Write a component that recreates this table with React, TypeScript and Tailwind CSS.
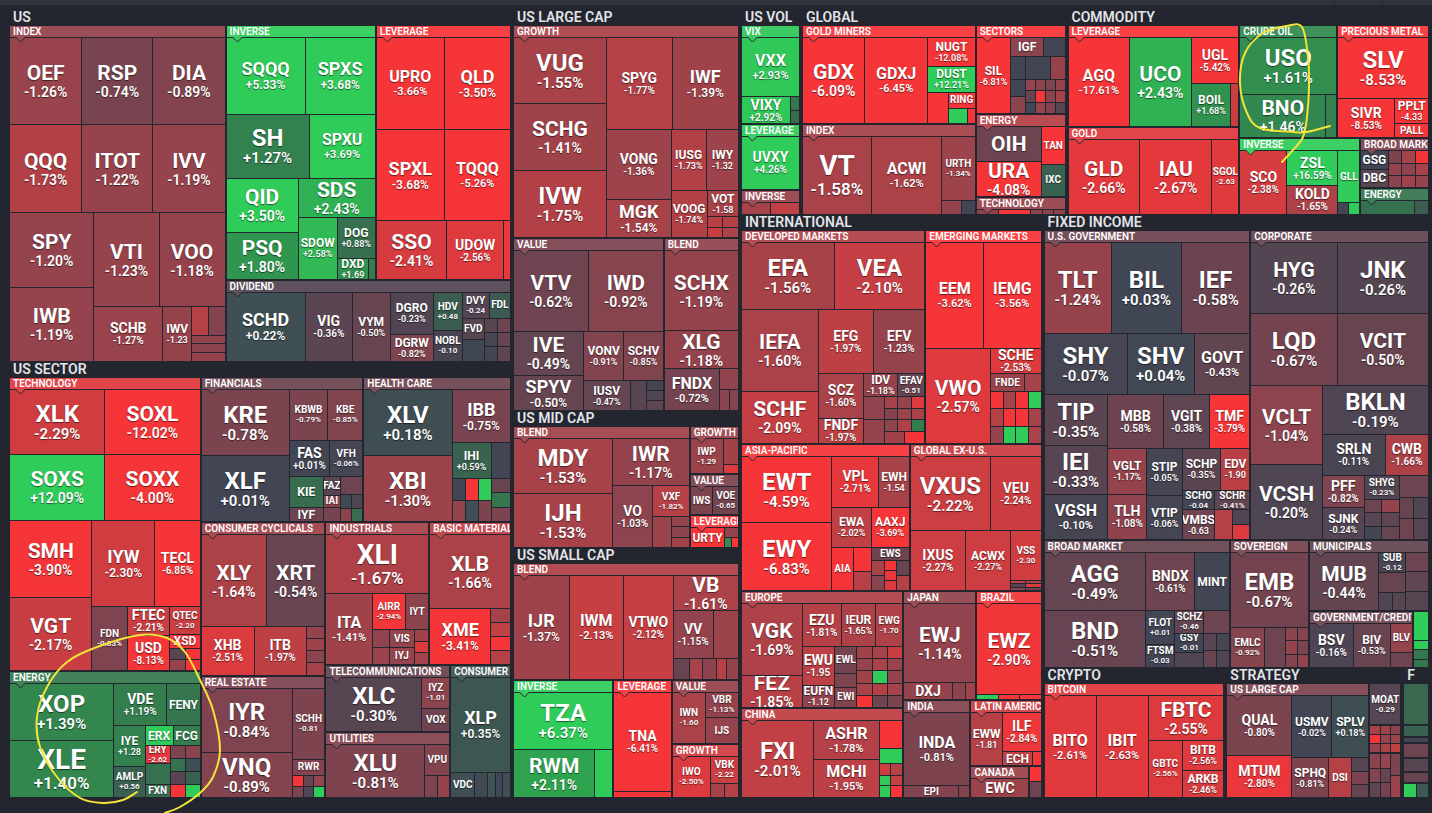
import React from "react";

const SIZE = {
  a: ["text-[28px]", "text-[17px]"],
  b: ["text-[24px]", "text-[15px]"],
  c: ["text-[21px]", "text-[14px]"],
  d: ["text-[18px]", "text-[12px]"],
  e: ["text-[16px]", "text-[11px]"],
  f: ["text-[14px]", "text-[10px]"],
  g: ["text-[12px]", "text-[9px]"],
  h: ["text-[10px]", "text-[8px]"],
} as const;
type Z = keyof typeof SIZE;

type Tile = { k: "x"; s: number; n: string; p: string; z: Z; v: number };
type Box = { k: "r" | "c"; s: number; g: number; c: Node[] };
type Grp = { k: "g"; s: number; l: string; h: number; d: "r" | "c"; c: Node[] };
type Sec = { k: "s"; s: number; l: string; d: "r" | "c"; c: Node[] };
type Node = Tile | Box | Grp | Sec;

// finviz-like colour scale
const STOPS = [
  [-3, 246, 53, 56],
  [-2, 191, 64, 69],
  [-1, 139, 68, 78],
  [0, 65, 69, 84],
  [1, 53, 118, 78],
  [2, 47, 158, 79],
  [3, 48, 204, 90],
];
function tone(v: number, lift = 0) {
  const x = Math.max(-3, Math.min(3, v));
  let i = 0;
  while (i < STOPS.length - 2 && x > STOPS[i + 1][0]) i++;
  const a = STOPS[i];
  const b = STOPS[i + 1];
  const f = (x - a[0]) / (b[0] - a[0]);
  const ch = [1, 2, 3].map((j) => {
    const c = a[j] + (b[j] - a[j]) * f;
    return Math.round(c + (255 - c) * lift);
  });
  return `rgb(${ch.join(",")})`;
}

const t = (s: number, n: string, p: string, z: Z = "f", v?: number): Tile => ({
  k: "x",
  s,
  n,
  p,
  z,
  v: v ?? parseFloat(p),
});
const b = (s: number, v: number): Tile => ({ k: "x", s, n: "", p: "", z: "h", v });
const box =
  (k: "r" | "c", g: number) =>
  (s: number, ...c: Node[]): Box => ({ k, s, g, c });
const row = box("r", 1);
const col = box("c", 1);
const ROW = box("r", 2);
const COL = box("c", 2);
const R4 = box("r", 4);
const C0 = box("c", 0);
const br = (s: number, ...v: number[]) => row(s, ...v.map((x) => b(1, x)));
const bc = (s: number, ...v: number[]) => col(s, ...v.map((x) => b(1, x)));
const grp = (s: number, l: string, h: number, d: "r" | "c", ...c: Node[]): Grp => ({ k: "g", s, l, h, d, c });
const sec = (s: number, l: string, d: "r" | "c", ...c: Node[]): Sec => ({ k: "s", s, l, d, c });

const US = sec(352, "US", "r",
  grp(215, "INDEX", -1.2, "c",
    row(87, t(72, "OEF", "-1.26%", "c"), t(71, "RSP", "-0.74%", "c"), t(72, "DIA", "-0.89%", "c")),
    row(87, t(72, "QQQ", "-1.73%", "c"), t(71, "ITOT", "-1.22%", "c"), t(72, "IVV", "-1.19%", "c")),
    row(149,
      col(84, t(75, "SPY", "-1.20%", "c"), t(74, "IWB", "-1.19%", "c")),
      col(131,
        row(95, t(65, "VTI", "-1.23%", "c"), t(66, "VOO", "-1.18%", "c")),
        row(54, t(69, "SCHB", "-1.27%", "f"), t(29, "IWV", "-1.23", "g"),
          col(33, br(29, -1.8, -0.9), br(8, -1.1), br(8, -1.0), br(8, -1.2)))))),
  COL(284,
    ROW(253,
      grp(149, "INVERSE", 3.2, "c",
        row(77, t(79, "SQQQ", "+5.33%", "d"), t(70, "SPXS", "+3.68%", "d")),
        row(64, t(83, "SH", "+1.27%", "b"), t(66, "SPXU", "+3.69%", "e")),
        row(101,
          col(72, t(54, "QID", "+3.50%", "c"), t(47, "PSQ", "+1.80%", "c")),
          col(77, t(39, "SDS", "+2.43%", "c"),
            row(62, t(39, "SDOW", "+2.58%", "g"),
              col(38, t(42, "DOG", "+0.88%", "g"), row(20, t(32, "DXD", "+1.69", "g"), b(6, 1.2))))))),
      grp(134, "LEVERAGE", -3.6, "c",
        row(92, t(68, "UPRO", "-3.66%", "e"), t(66, "QLD", "-3.50%", "d")),
        row(92, t(68, "SPXL", "-3.68%", "d"), t(66, "TQQQ", "-5.26%", "e")),
        row(58, t(71, "SSO", "-2.41%", "c"), t(57, "UDOW", "-2.56%", "f"), b(6, -2.8)))),
    grp(80, "DIVIDEND", -0.25, "r",
      t(79, "SCHD", "+0.22%", "d"), t(47, "VIG", "-0.36%", "f"), t(37, "VYM", "-0.50%", "g"),
      col(43, t(42, "DGRO", "-0.23%", "g"), t(26, "DGRW", "-0.82%", "g")),
      col(28, t(38, "HDV", "+0.48", "h"), t(30, "NOBL", "-0.10", "h")),
      col(48,
        row(26, t(27, "DVY", "-0.24", "h"), t(21, "FDL", "", "h", 0.4)),
        row(42, col(22, t(20, "FVD", "", "h", -0.3), b(21, 0.05)), col(26, br(1, -0.3, -0.6), br(1, -0.1, -0.5), br(1, 0, -0.4)))))));

const SECTOR = sec(437, "US SECTOR", "r",
  COL(190,
    grp(294, "TECHNOLOGY", -2.6, "c",
      row(65, t(95, "XLK", "-2.29%", "b"), t(95, "SOXL", "-12.02%", "c")),
      row(65, t(95, "SOXS", "+12.09%", "c"), t(95, "SOXX", "-4.00%", "c")),
      row(151,
        col(82, t(77, "SMH", "-3.90%", "c"), t(74, "VGT", "-2.17%", "c")),
        col(108,
          row(87, t(63, "IYW", "-2.30%", "d"), t(45, "TECL", "-6.85%", "f")),
          row(64, t(35, "FDN", "-0.83%", "h"),
            col(43, t(28, "FTEC", "-2.21%", "f"), t(36, "USD", "-8.13%", "f")),
            col(30, t(28, "QTEC", "-2.20", "h"), t(13, "XSD", "", "g", -3.2), row(23, bc(1, -0.3, -1.2), bc(1, -3, -3))))))),
    grp(125, "ENERGY", 1.1, "r",
      col(104, t(56, "XOP", "+1.39%", "b"), t(56, "XLE", "+1.40%", "a")),
      col(86,
        row(41, t(53, "VDE", "+1.19%", "f"), t(33, "FENY", "", "g", 1.0)),
        row(71,
          col(31, t(40, "IYE", "+1.28", "g"), t(31, "AMLP", "+0.56", "h")),
          col(55,
            row(19, t(28, "ERX", "", "g", 3.0), t(27, "FCG", "", "g", 1.2)),
            row(52,
              col(25, t(18, "ERY", "-2.62", "h"), b(21, 0.9), t(13, "FXN", "", "h", 0.8)),
              col(30, br(1, -0.8, -1.0), br(1, 0.9, 0.2), br(1, -0.3, 0.6), br(1, -3, 3)))))))),
  COL(309,
    ROW(144,
      grp(161, "FINANCIALS", -0.6, "r",
        col(88, t(66, "KRE", "-0.78%", "b"), t(65, "XLF", "+0.01%", "b")),
        col(73,
          row(51, t(38, "KBWB", "-0.79%", "h"), t(35, "KBE", "-0.85%", "h")),
          row(35, t(40, "FAS", "+0.01%", "f"), t(33, "VFH", "-0.06%", "h")),
          row(45,
            col(34, t(31, "KIE", "", "g", 0.8), t(14, "IYF", "", "g", -0.6)),
            col(17, t(19, "FAZ", "", "h", -0.3), t(12, "IAI", "", "h", -1.0), b(14, -0.7)),
            col(22, b(18, -0.6), br(14, 0.1, -0.2), br(13, -1, 0.8))))),
      grp(146, "HEALTH CARE", -0.6, "r",
        col(88, t(66, "XLV", "+0.18%", "b"), t(65, "XBI", "-1.30%", "b")),
        col(58, t(53, "IBB", "-0.75%", "d"),
          row(78,
            col(39, t(35, "IHI", "+0.59%", "g"), row(43, bc(1, 0, -1.2), bc(1, -3, 0.2), bc(1, 3, -0.8))),
            col(19, b(35, 0), b(14, -0.5), b(14, 1), b(14, -0.8)))))),
    ROW(274,
      COL(123,
        grp(152, "CONSUMER CYCLICALS", -1.4, "c",
          row(91, t(65, "XLY", "-1.64%", "c"), t(58, "XRT", "-0.54%", "c")),
          row(48, t(53, "XHB", "-2.51%", "f"), t(52, "ITB", "-1.97%", "f"), bc(18, -1.2, -1.4, -1.0, -1.5))),
        grp(121, "REAL ESTATE", -0.8, "r",
          col(91, t(64, "IYR", "-0.84%", "b"), t(45, "VNQ", "-0.89%", "b")),
          col(32, t(72, "SCHH", "-0.81", "h"), t(15, "RWR", "", "h", -0.9), row(22, bc(1, -3, -0.8), bc(1, -0.5, -0.2), bc(1, -1.2, 3))))),
      COL(184,
        ROW(141,
          grp(102, "INDUSTRIALS", -1.5, "c",
            t(58, "XLI", "-1.67%", "a"),
            row(70, t(46, "ITA", "-1.41%", "e"),
              col(56,
                row(36, t(33, "AIRR", "-2.94%", "h"), t(23, "IYT", "", "h", -1.0)),
                row(34, bc(17, -1.1, -1.3), col(25, t(18, "VIS", "", "h", -1.2), t(16, "IYJ", "", "h", -1.2)), bc(14, -1.4, -2.5, -1.5))))),
          grp(80, "BASIC MATERIALS", -2.0, "c",
            t(73, "XLB", "-1.66%", "c"),
            row(55, t(61, "XME", "-3.41%", "d"), bc(19, -1.5, -2.0, -3, -1.8)))),
        ROW(132,
          COL(123,
            grp(66, "TELECOMMUNICATIONS", -0.5, "r", t(96, "XLC", "-0.30%", "b"), col(27, t(31, "IYZ", "-1.01", "h"), t(23, "VOX", "", "h", -0.6))),
            grp(64, "UTILITIES", -0.9, "r", t(99, "XLU", "-0.81%", "b"), col(24, t(30, "VPU", "", "h", -0.9), br(22, -0.8, -1.2)))),
          grp(59, "CONSUMER DEFENSIVE", 0.3, "c",
            t(96, "XLP", "+0.35%", "d"),
            row(24, t(24, "VDC", "", "h", 0.2), b(12, 0.1), b(7, 0.3), b(7, 0.0), b(7, 0.2))))))));

const LARGE = sec(402, "US LARGE CAP", "c",
  grp(211, "GROWTH", -1.6, "r",
    col(92, t(66, "VUG", "-1.55%", "b"), t(67, "SCHG", "-1.41%", "c"), t(67, "IVW", "-1.75%", "b")),
    col(131,
      row(92, t(65, "SPYG", "-1.77%", "f"), t(66, "IWF", "-1.39%", "d")),
      row(108,
        col(64, t(70, "VONG", "-1.36%", "f"), t(38, "MGK", "-1.54%", "d")),
        col(67,
          row(61, t(35, "IUSG", "-1.73%", "g"), t(32, "IWY", "-1.32", "g")),
          row(47, t(36, "VOOG", "-1.74%", "g"), col(31, t(26, "VOT", "-1.58", "g"), row(21, bc(1, -1.9, -2.2), bc(1, -1.8, -1.6)))))))),
  ROW(171,
    grp(148, "VALUE", -0.8, "c",
      row(80, t(74, "VTV", "-0.62%", "c"), t(74, "IWD", "-0.92%", "c")),
      row(79,
        col(69, t(44, "IVE", "-0.49%", "c"), t(35, "SPYV", "-0.50%", "d")),
        col(79,
          row(49, t(40, "VONV", "-0.91%", "g"), t(39, "SCHV", "-0.85%", "g")),
          row(30, t(47, "IUSV", "-0.47%", "g"), bc(16, -0.3), bc(16, -0.1, -0.2, -0.4))))),
    grp(73, "BLEND", -1.1, "c",
      t(80, "SCHX", "-1.19%", "c"), t(37, "XLG", "-1.18%", "c"),
      row(42, t(55, "FNDX", "-0.72%", "e"), col(18, b(1, -1.1), br(1, -1.0, -0.9))))));

const MID = sec(137, "US MID CAP", "r",
  grp(174, "BLEND", -1.4, "r",
    col(98, t(54, "MDY", "-1.53%", "b"), t(53, "IJH", "-1.53%", "b")),
    col(76, t(46, "IWR", "-1.17%", "c"),
      row(61, t(40, "VO", "-1.03%", "f"), col(36, t(30, "VXF", "-1.82%", "h"), row(31, bc(1, -1.3), bc(1, -1.2, -1.0, -1.4)))))),
  COL(47,
    grp(46, "GROWTH", -1.3, "r", t(33, "IWP", "-1.29", "h"), col(15, b(3, -1.4), b(1, -2.5))),
    grp(39, "VALUE", -0.8, "r", t(22, "IWS", "", "h", -0.8), t(25, "VOE", "-0.65", "h")),
    grp(31, "LEVERAGE", -3.5, "r", t(34, "URTY", "", "g", -3.6), col(13, b(1, -1.2), br(1, 1.5, -3)))));

const SMALL = sec(250, "US SMALL CAP", "c",
  grp(114, "BLEND", -1.7, "r",
    t(55, "IJR", "-1.37%", "d"), t(54, "IWM", "-2.13%", "e"), t(49, "VTWO", "-2.12%", "f"),
    col(65,
      t(34, "VB", "-1.61%", "c"),
      row(47, t(40, "VV", "-1.15%", "f"), b(25, -1.3)),
      row(20, b(17, -0.5), b(13, -1.5), b(13, -1), b(10, -1.8), b(12, -1.2)))),
  ROW(116,
    grp(98, "INVERSE", 3.2, "c", t(56, "TZA", "+6.37%", "b"), row(46, t(80, "RWM", "+2.11%", "c"), b(17, 3))),
    grp(56, "LEVERAGE", -3.8, "c", t(98, "TNA", "-6.41%", "f"), b(5, -3)),
    COL(65,
      grp(62, "VALUE", -1.2, "r", t(32, "IWN", "-1.60", "h"), col(32, t(24, "VBR", "-1.13%", "h"), t(24, "IJS", "", "h", -1.2))),
      grp(52, "GROWTH", -2.3, "r", t(37, "IWO", "-2.50%", "h"), col(27, t(26, "VBK", "-2.22", "h"), br(13, -1.5, -1.8))))));

const VOL = sec(57, "US VOL", "c",
  grp(96, "VIX", 2.9, "c", t(59, "VXX", "+2.93%", "e"), row(26, t(48, "VIXY", "+2.92%", "f"), col(8, b(1, 1.0), b(1, 0.8)))),
  grp(63, "LEVERAGE", 4, "c", t(50, "UVXY", "+4.26%", "f")),
  grp(23, "INVERSE", -1.2, "r", b(1, -1.5), b(1, -2)));

const GLOBAL = sec(262, "GLOBAL", "r",
  COL(172,
    grp(97, "GOLD MINERS", -4, "r",
      t(62, "GDX", "-6.09%", "c"), t(63, "GDXJ", "-6.45%", "e"),
      col(47, t(29, "NUGT", "-12.08%", "g"), t(26, "DUST", "+12.21%", "g"),
        row(31, b(20, -3.5), col(27, t(16, "RING", "", "h", -3.2), row(15, b(20, 3), b(7, -3)))))),
    grp(89, "INDEX", -1.5, "r",
      t(69, "VT", "-1.58%", "a"), t(70, "ACWI", "-1.62%", "e"),
      col(33, t(63, "URTH", "-1.34%", "h"), row(13, b(19, -1.2), b(13, 0))))),
  COL(88,
    grp(87, "SECTORS", -3, "r",
      t(34, "SIL", "-6.81%", "g"),
      col(54,
        row(19, t(33, "IGF", "", "g", -1.0), b(21, 0)),
        row(22, b(14, 0), b(26, 0), b(14, -1.2)),
        row(35, bc(14, 0, -1), col(40, br(1, -1.2, -1.0, -0.8, -1.2), br(1, -0.5, -3, -1, -1.5), br(1, 0, -1.2, -0.9, -0.3))))),
    grp(80, "ENERGY", -1.8, "r",
      col(65, t(34, "OIH", "", "c", -0.6), t(34, "URA", "-4.08%", "c")),
      col(23, t(37, "TAN", "", "h", -3.3), t(31, "IXC", "", "h", 0.6))),
    grp(16, "TECHNOLOGY", -1.2, "r", b(20, -1), b(30, -3), b(10, -1), b(10, -1), b(10, -1))));

const COMMODITY = sec(360, "COMMODITY", "r",
  COL(170,
    grp(100, "LEVERAGE", -4, "r",
      t(61, "AGQ", "-17.61%", "e"), t(61, "UCO", "+2.43%", "c"),
      col(47, t(46, "UGL", "-5.42%", "f"), row(43, t(40, "BOIL", "+1.68%", "g"), b(7, -2.2)))),
    grp(86, "GOLD", -2.6, "r", t(71, "GLD", "-2.66%", "c"), t(72, "IAU", "-2.67%", "c"), t(26, "SGOL", "-2.63", "h"))),
  COL(188,
    ROW(111,
      grp(96, "CRUDE OIL", 1.5, "c", t(57, "USO", "+1.61%", "b"), row(43, t(86, "BNO", "+1.46%", "c"), b(10, 1.3))),
      grp(90, "PRECIOUS METAL", -6, "c",
        t(61, "SLV", "-8.53%", "b"),
        row(39, t(57, "SIVR", "-8.53%", "f"), col(33, t(25, "PPLT", "-4.33", "g"), t(14, "PALL", "", "h", -3.3))))),
    ROW(74,
      grp(119, "INVERSE", 3, "r",
        t(47, "SCO", "-2.38%", "f"),
        col(51, t(34, "ZSL", "+16.59%", "f"), t(28, "KOLD", "-1.65%", "f")),
        col(21, t(51, "GLL", "", "h", 3), row(11, b(10, 0), b(10, 3)))),
      COL(67,
        grp(48, "BROAD MARKET", -0.8, "r",
          col(27, t(18, "GSG", "", "g", 0), t(18, "DBC", "", "g", -0.3)),
          col(40, br(1, -0.8, -1.5, -3), br(1, -1.2, -1.0, -1.5), br(1, -1, -1.4, -1.2))),
        grp(25, "ENERGY", 1.0, "r", b(40, 0.9), b(10, 0.5))))));

const INTL = sec(299, "INTERNATIONAL", "c",
  ROW(213,
    grp(182, "DEVELOPED MARKETS", -1.7, "c",
      row(67, t(92, "EFA", "-1.56%", "b"), t(90, "VEA", "-2.10%", "b")),
      row(134,
        col(76, t(82, "IEFA", "-1.60%", "c"), t(52, "SCHF", "-2.09%", "c")),
        col(106,
          row(64, t(55, "EFG", "-1.97%", "f"), t(51, "EFV", "-1.23%", "f")),
          row(70,
            col(45, t(45, "SCZ", "-1.60%", "f"), t(25, "FNDF", "-1.97%", "f")),
            col(61,
              row(23, t(34, "IDV", "-1.18%", "g"), t(27, "EFAV", "-0.51", "h")),
              row(47, bc(20, -1.1, -1.2), col(41, br(1, -1.5, -1.2, -2.5), br(1, -0.9, -1.3, -1.6), br(1, -1.1, -1.7, 1.2), br(1, -1.4, -3)))))))),
    grp(114, "EMERGING MARKETS", -3.2, "c",
      row(106, t(57, "EEM", "-3.62%", "e"), t(57, "IEMG", "-3.56%", "e")),
      row(95, t(64, "VWO", "-2.57%", "c"),
        col(50,
          t(26, "SCHE", "-2.53%", "f"),
          row(18, t(34, "FNDE", "", "h", -1.3), b(16, -1.5)),
          br(17, -3, -1.5, -3, 3), br(17, -1.8, -3, -3, -1.5), br(17, -1.2, 3, 3, -1.6))))),
  ROW(146,
    grp(167, "ASIA-PACIFIC", -3.5, "r",
      col(90, t(66, "EWT", "-4.59%", "b"), t(67, "EWY", "-6.83%", "b")),
      col(77,
        row(51, t(47, "VPL", "-2.71%", "f"), t(30, "EWH", "-1.54", "g")),
        row(39, t(39, "EWA", "-2.02%", "g"), t(38, "AAXJ", "-3.69%", "g")),
        row(43, t(21, "AIA", "", "h", -3.2), col(18, b(24, -3), b(19, -1.8)),
          col(38, t(13, "EWS", "", "h", -0.6), row(30, bc(1, -1.5, -1.0), bc(1, -3, -2.8, -2.5), bc(1, -0.5, -1.8)))))),
    grp(130, "GLOBAL EX-U.S.", -2.2, "c",
      row(74, t(80, "VXUS", "-2.22%", "b"), t(50, "VEU", "-2.24%", "f")),
      row(59, t(55, "IXUS", "-2.27%", "f"), t(45, "ACWX", "-2.27%", "g"),
        col(30, t(20, "VSS", "-2.30", "h"), br(1, -2, -1.8), br(1, -0.3, -2.5), br(1, -1, -0.6))))),
  ROW(206,
    COL(160,
      grp(116, "EUROPE", -1.7, "r",
        col(60, t(72, "VGK", "-1.69%", "c"), t(32, "FEZ", "-1.85%", "c")),
        col(100,
          row(43, t(39, "EZU", "-1.81%", "f"), t(34, "IEUR", "-1.65%", "g"), t(27, "EWG", "-1.70", "h")),
          row(61,
            col(32, t(39, "EWU", "-1.95", "f"), t(22, "EUFN", "-1.12", "g")),
            col(22, t(27, "EWL", "", "h", -0.7), b(14, -0.8), t(20, "EWI", "", "h", -0.9)),
            col(46, br(1, -1.4, -1.5, -2.2), br(1, -1.2, -1.6, -1.3), br(1, -1.4, 3, -1.2), br(1, -1.6, -1.8, -1.5), br(1, -3, -0.6, -0.8))))),
      grp(89, "CHINA", -2, "r",
        t(72, "FXI", "-2.01%", "b"),
        col(65, t(39, "ASHR", "-1.78%", "e"), t(38, "MCHI", "-1.95%", "e")),
        col(23, b(26, -3.2), b(13, 3), br(10, -2.3, -1.8), br(9, 3, -2.1), br(10, 3, -3)))),
    COL(136,
      ROW(107,
        grp(71, "JAPAN", -1.1, "c", t(79, "EWJ", "-1.14%", "c"), row(16, t(48, "DXJ", "", "f", -1.2), b(12, -1.0), b(10, -1.4))),
        grp(63, "BRAZIL", -2.9, "c", t(90, "EWZ", "-2.90%", "c"), br(4, 3, -3, -3))),
      ROW(96,
        grp(65, "INDIA", -0.9, "c", t(74, "INDA", "-0.81%", "e"), row(11, t(54, "EPI", "", "h", -0.9), b(10, -0.9))),
        COL(69,
          grp(65, "LATIN AMERICA", -2.2, "r",
            t(31, "EWW", "-1.81", "g"),
            col(38, t(37, "ILF", "-2.84%", "f"), row(13, t(30, "ECH", "", "g", -2.0), b(8, -3)))),
          ROW(30, grp(56, "CANADA", -1.3, "r", t(56, "EWC", "", "f", -1.3)), col(10, b(14, -3), b(15, -0.6))))))));

const FIXED = sec(454, "FIXED INCOME", "c",
  ROW(309,
    grp(205, "U.S. GOVERNMENT", -0.6, "c",
      row(91, t(67, "TLT", "-1.24%", "b"), t(70, "BIL", "+0.03%", "b"), t(68, "IEF", "-0.58%", "b")),
      row(60, t(83, "SHY", "-0.07%", "b"), t(67, "SHV", "+0.04%", "b"), t(55, "GOVT", "-0.43%", "e")),
      row(146,
        col(63, t(52, "TIP", "-0.35%", "b"), t(49, "IEI", "-0.33%", "b"), t(45, "VGSH", "-0.10%", "e")),
        col(142,
          row(54, t(56, "MBB", "-0.58%", "f"), t(46, "VGIT", "-0.38%", "f"), t(40, "TMF", "-3.79%", "f")),
          row(92,
            col(39, t(46, "VGLT", "-1.17%", "g"), t(46, "TLH", "-1.08%", "f")),
            col(35, t(48, "STIP", "-0.05%", "g"), t(44, "VTIP", "-0.06%", "g")),
            col(68,
              row(43, t(39, "SCHP", "-0.35%", "g"), t(29, "EDV", "-1.90", "g")),
              row(19, t(33, "SCHO", "-0.04", "h"), t(35, "SCHR", "-0.41%", "h")),
              row(30, t(32, "VMBS", "-0.63", "g"), bc(17, -1.8), bc(17, -0.2, -2.5))))))),
    grp(177, "CORPORATE", -0.45, "c",
      row(71, t(86, "HYG", "-0.26%", "c"), t(91, "JNK", "-0.26%", "b")),
      row(71, t(86, "LQD", "-0.67%", "b"), t(91, "VCIT", "-0.50%", "c")),
      row(155,
        col(71, t(80, "VCLT", "-1.04%", "c"), t(75, "VCSH", "-0.20%", "c")),
        col(106,
          t(49, "BKLN", "-0.19%", "b"),
          row(41, t(63, "SRLN", "-0.11%", "f"), t(43, "CWB", "-1.66%", "f")),
          row(65,
            col(42, t(33, "PFF", "-0.82%", "f"), t(32, "SJNK", "-0.24%", "g")),
            col(35, t(24, "SHYG", "-0.23%", "h"), row(41, bc(1, -0.6, -0.3, 0), bc(1, -1.2, -0.4, -0.5))),
            col(29, b(22, -0.6), br(20, -0.5, -0.2), br(21, -0.6, -0.3))))))),
  ROW(126,
    grp(184, "BROAD MARKET", -0.5, "r",
      col(101, t(57, "AGG", "-0.49%", "b"), t(57, "BND", "-0.51%", "b")),
      col(83,
        row(57, t(49, "BNDX", "-0.61%", "f"), t(34, "MINT", "", "g", 0)),
        row(57,
          col(29, t(34, "FLOT", "+0.01", "h"), t(23, "FTSM", "-0.03", "h")),
          col(29, t(23, "SCHZ", "-0.46", "h"), t(19, "GSY", "-0.01", "h"), b(15, -0.2)),
          col(25, b(23, -0.6), br(17, -0.3, -0.1), br(17, -0.5, -0.2))))),
    grp(77, "SOVEREIGN", -0.7, "c",
      t(74, "EMB", "-0.67%", "b"),
      row(40, t(34, "EMLC", "-0.92%", "h"), bc(20, -0.6), col(22, br(1, -1.0, -0.9), br(1, -1.2, -0.8), br(1, -0.9, -1.1)))),
    COL(118,
      grp(69, "MUNICIPALS", -0.45, "r",
        t(69, "MUB", "-0.44%", "c"),
        col(26, t(19, "SUB", "-0.12", "h"), b(20, -0.5), br(17, -0.2, -0.3)),
        bc(22, -0.6, -0.4, -0.3)),
      ROW(56,
        grp(103, "GOVERNMENT/CREDIT", -0.6, "r",
          t(44, "BSV", "-0.16%", "f"), t(37, "BIV", "-0.53%", "g"),
          col(22, t(29, "BLV", "", "h", -1.2), b(14, -0.6))),
        col(14, b(26, 3), b(7, 3), b(8, 1), b(7, 1))))));

const CRYPTO = sec(180, "CRYPTO", "r",
  grp(180, "BITCOIN", -2.6, "r",
    t(52, "BITO", "-2.61%", "e"), t(52, "IBIT", "-2.63%", "e"),
    col(76, t(44, "FBTC", "-2.55%", "c"),
      row(57, t(34, "GBTC", "-2.56%", "h"), col(42, t(30, "BITB", "-2.56%", "g"), t(27, "ARKB", "-2.46%", "g"))))));

const STRATEGY = sec(174, "STRATEGY", "r",
  grp(142, "US LARGE CAP", -0.8, "r",
    col(65, t(60, "QUAL", "-0.80%", "f"), t(41, "MTUM", "-2.80%", "f")),
    col(77,
      row(62, t(40, "USMV", "-0.02%", "g"), t(37, "SPLV", "+0.18%", "g")),
      row(39, t(37, "SPHQ", "-0.81%", "g"), t(23, "DSI", "", "h", -1.8), bc(17, -0.3, -0.8, -0.5)))),
  COL(30,
    t(40, "MOAT", "-0.29", "h"),
    row(26, bc(1, -1.5, -3, -1.2), bc(1, -1.4, -1.2, -1.6), bc(1, -1.0, -1.3, -2)),
    row(43, bc(1, -1, -0.9, -0.4), bc(1, -1.2, -0.5, -0.7), bc(1, -0.8, -1.3))));

const FACTOR = sec(24, "F", "c",
  b(41, 0.7), b(11, 0.6), b(4, 0), b(14, -0.6), b(12, -0.3), b(9, -0.5), br(14, 3, 0.4));

const ROOT = R4(1,
  C0(500, US, SECTOR),
  C0(224, LARGE, MID, SMALL),
  C0(686,
    R4(205, VOL, GLOBAL, COMMODITY),
    R4(584, INTL, C0(384, FIXED, R4(130, CRYPTO, STRATEGY, FACTOR)))));

const DIR = { r: "flex-row", c: "flex-col" };
const GAP: Record<number, string> = { 0: "", 1: "gap-px", 2: "gap-[2px]", 4: "gap-[4px]" };
const SHADOW = "[text-shadow:0_1px_1px_rgba(0,0,0,0.55)]";

function Cell({ n }: { n: Tile }) {
  const [zn, zp] = SIZE[n.z];
  return (
    <div
      className="flex min-h-0 min-w-0 flex-col items-center justify-center overflow-hidden whitespace-nowrap text-center leading-none text-white"
      style={{ flex: `${n.s} 1 0px`, background: tone(n.v) }}
    >
      {n.n && <span className={`${zn} font-bold ${SHADOW}`}>{n.n}</span>}
      {n.p && <span className={`${zp} mt-px font-semibold ${SHADOW}`}>{n.p}</span>}
    </div>
  );
}

function Item({ n }: { n: Node }) {
  const flex = { flex: `${n.s} 1 0px` };
  if (n.k === "x") return <Cell n={n} />;
  if (n.k === "r" || n.k === "c") {
    return (
      <div className={`flex min-h-0 min-w-0 ${DIR[n.k]} ${GAP[n.g]}`} style={flex}>
        {n.c.map((c, i) => (
          <Item key={i} n={c} />
        ))}
      </div>
    );
  }
  if (n.k === "g") {
    const hc = tone(n.h, 0.06);
    return (
      <div className="relative flex min-h-0 min-w-0 flex-col gap-px" style={flex}>
        <div
          className="h-[11px] shrink-0 overflow-hidden whitespace-nowrap pl-[3px] text-[10px] font-semibold uppercase leading-[11px] text-white"
          style={{ background: hc }}
        >
          {n.l}
        </div>
        <svg className="absolute left-[5px] top-[11px] z-10" width="11" height="6" viewBox="0 0 11 6">
          <path d="M0.5 0 L5.5 5 L10.5 0" fill={hc} stroke="#23262e" strokeWidth="1" />
        </svg>
        <div className={`flex min-h-0 min-w-0 flex-1 ${DIR[n.d]} gap-px`}>
          {n.c.map((c, i) => (
            <Item key={i} n={c} />
          ))}
        </div>
      </div>
    );
  }
  return (
    <div className="flex min-h-0 min-w-0 flex-col" style={flex}>
      <div className="h-[17px] shrink-0 overflow-hidden whitespace-nowrap pl-[3px] text-[14px] font-semibold leading-[17px] text-[#e2e4e9]">
        {n.l}
      </div>
      <div className={`flex min-h-0 min-w-0 flex-1 ${DIR[n.d]} gap-[2px]`}>
        {n.c.map((c, i) => (
          <Item key={i} n={c} />
        ))}
      </div>
    </div>
  );
}

// hand-drawn marker loops over the map
function smooth(p: number[][]) {
  let d = `M${p[0][0]} ${p[0][1]}`;
  for (let i = 0; i < p.length - 1; i++) {
    const p0 = p[i - 1] || p[i];
    const p1 = p[i];
    const p2 = p[i + 1];
    const p3 = p[i + 2] || p2;
    const c1 = [p1[0] + (p2[0] - p0[0]) / 6, p1[1] + (p2[1] - p0[1]) / 6];
    const c2 = [p2[0] - (p3[0] - p1[0]) / 6, p2[1] - (p3[1] - p1[1]) / 6];
    d += ` C${c1[0]} ${c1[1]} ${c2[0]} ${c2[1]} ${p2[0]} ${p2[1]}`;
  }
  return d;
}

const LOOP_OIL = [
  [1330, 126], [1307, 132], [1293, 132], [1260, 128], [1247, 113], [1240, 83], [1245, 53], [1263, 33],
  [1287, 26], [1302, 27], [1308, 57], [1309, 87], [1307, 117], [1303, 137], [1293, 150], [1282, 162],
];
const LOOP_ENERGY = [
  [137, 792], [123, 800], [103, 803], [80, 798], [57, 777], [40, 747], [37, 717], [47, 687], [67, 662],
  [97, 647], [140, 635], [167, 638], [185, 652], [200, 680], [213, 710], [220, 750], [213, 777],
  [200, 793], [180, 807], [165, 813],
];

export default function App() {
  return (
    <div className="relative h-[813px] w-[1432px] overflow-hidden bg-[#23262e] font-['Roboto','Liberation_Sans',sans-serif]">
      <div className="flex h-[5px] bg-[#30333d]">
        <div className="ml-auto w-[49px] border-x border-[#23262e]" />
        <div className="w-[49px]" />
      </div>
      <div className="flex h-[792px] pl-[10px] pr-[4px] pt-[4px]">
        <Item n={ROOT} />
      </div>
      <svg className="pointer-events-none absolute inset-0" width="1432" height="813" viewBox="0 0 1432 813">
        <path d={smooth(LOOP_OIL)} fill="none" stroke="#f3e33a" strokeWidth="2" strokeLinecap="round" />
        <path d={smooth(LOOP_ENERGY)} fill="none" stroke="#f3e33a" strokeWidth="2" strokeLinecap="round" />
      </svg>
    </div>
  );
}
